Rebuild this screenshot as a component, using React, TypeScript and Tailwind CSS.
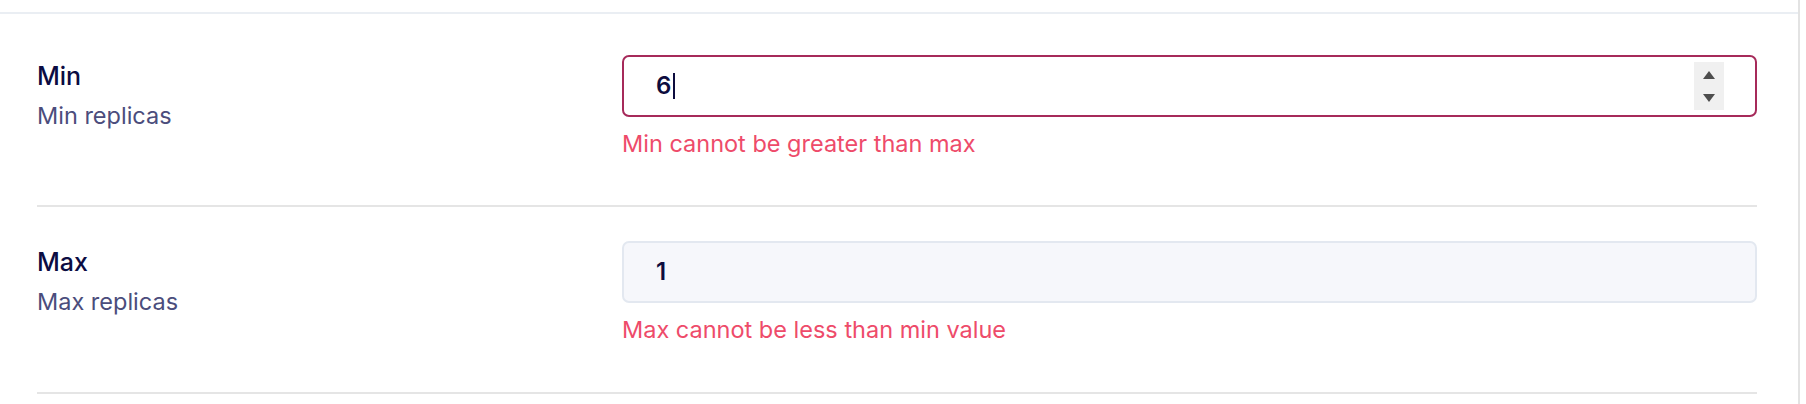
// Replica settings form
import React from 'react';

interface FieldRowProps {
  label: string;
  description: string;
  value: string;
  error: string;
  focused?: boolean;
  first?: boolean;
}

const Stepper = () => (
  <div className="w-[30px] h-[48px] bg-[#f0f0f0] flex flex-col items-center justify-center gap-[15px]">
    <svg width="12" height="8" viewBox="0 0 12 8">
      <path d="M6 0 L12 8 L0 8 Z" fill="#4d4d4d" />
    </svg>
    <svg width="12" height="8" viewBox="0 0 12 8">
      <path d="M0 0 L12 0 L6 8 Z" fill="#4d4d4d" />
    </svg>
  </div>
);

const FieldRow: React.FC<FieldRowProps> = ({ label, description, value, error, focused, first }) => (
  <div
    className={`grid grid-cols-[585px_1fr] border-b-2 border-[#e5e5e5] ${
      first ? 'pt-[41px] pb-[46px]' : 'pt-[34px] pb-[47px]'
    }`}
  >
    <div className="mt-[3px] flex flex-col">
      <span className="text-[25px] leading-[36px] font-medium text-[#0c0c42]">{label}</span>
      <span className="mt-[7px] text-[23.5px] leading-[30px] text-[#4b4d7c]">{description}</span>
    </div>
    <div className="flex flex-col">
      <div
        className={`h-[62px] rounded-[7px] border-2 flex items-center pl-[32px] pr-[31px] ${
          focused ? 'bg-white border-[#a62a5a]' : 'bg-[#f6f7fb] border-[#e3e8f0]'
        }`}
      >
        <span className="text-[24px] font-semibold text-[#0d0c3e]">{value}</span>
        {focused && <span className="ml-[2px] w-[2px] h-[26px] bg-[#0d0c3e]" />}
        <div className="flex-1" />
        {focused && <Stepper />}
      </div>
      <span className="mt-[12px] text-[23.5px] leading-[30px] text-[#ee4b6a]">{error}</span>
    </div>
  </div>
);

export default function App() {
  return (
    <div className="w-[1806px] h-[404px] bg-white flex font-['Inter',sans-serif] overflow-hidden">
      <div className="w-[1798px] flex flex-col">
        <div className="h-[14px] border-b-2 border-[#eaeef3]" />
        <div className="pl-[37px] pr-[41px]">
          <FieldRow
            first
            focused
            label="Min"
            description="Min replicas"
            value="6"
            error="Min cannot be greater than max"
          />
          <FieldRow
            label="Max"
            description="Max replicas"
            value="1"
            error="Max cannot be less than min value"
          />
        </div>
      </div>
      <div className="w-[2px] bg-[#e3e3e3]" />
    </div>
  );
}
